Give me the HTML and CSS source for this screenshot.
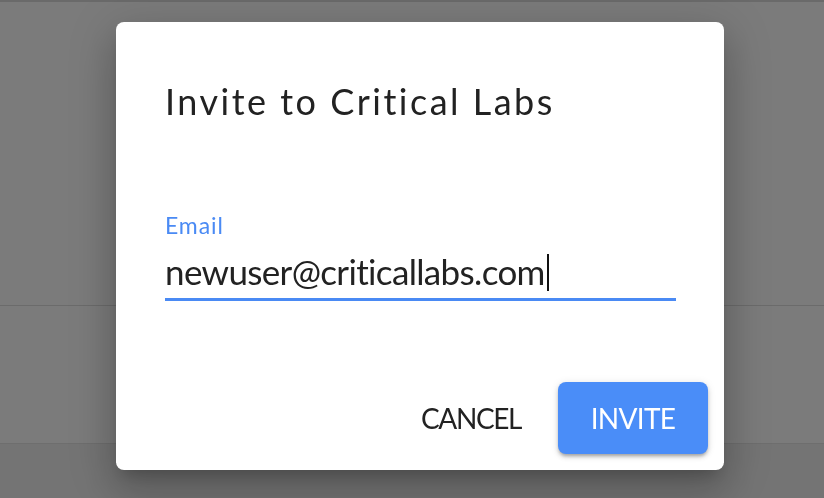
FILE: index.html
```html
<!DOCTYPE html>
<html lang="en">
<head>
<meta charset="utf-8">
<title>Invite to Critical Labs</title>
<link rel="stylesheet" href="styles.css">
</head>
<body>
<div class="app">
  <div class="topstrip"></div>
  <div class="panel"></div>
  <div class="card"></div>
  <div class="below"></div>
</div>
<div class="backdrop">
  <div class="dialog" role="dialog" aria-labelledby="dlg-title">
    <h2 class="title" id="dlg-title">Invite to Critical Labs</h2>
    <div class="field">
      <label class="label" for="email">Email</label>
      <div class="input" id="email"><span class="value">newuser@criticallabs.com</span><span class="caret"></span></div>
    </div>
    <div class="actions">
      <button class="btn btn-text" type="button">CANCEL</button>
      <button class="btn btn-primary" type="button">INVITE</button>
    </div>
  </div>
</div>
</body>
</html>
```
FILE: styles.css
```css
* { box-sizing: border-box; }
html, body { margin: 0; padding: 0; }
body {
  width: 824px;
  height: 498px;
  overflow: hidden;
  background: #7a7a7a;
  font-family: "Lato", "Open Sans", sans-serif;
}
.app {
  display: flex;
  flex-direction: column;
  height: 498px;
}
.topstrip {
  height: 2px;
  background: #6a6a6a;
}
.panel {
  height: 304px;
  border-bottom: 1px solid #6c6c6c;
  background: #7b7b7b;
}
.card {
  height: 138px;
  background: #7b7b7b;
  box-shadow: 0 2px 3px rgba(0,0,0,0.18);
  border-bottom: 1px solid #6e6e6e;
}
.below {
  flex: 1;
  background: #747474;
}
.backdrop {
  position: fixed;
  inset: 0;
  display: flex;
  align-items: flex-start;
  padding: 22px 0 0 116px;
}
.dialog {
  width: 608px;
  height: 448px;
  background: #ffffff;
  border-radius: 8px;
  display: flex;
  flex-direction: column;
  box-shadow: 0 11px 15px -7px rgba(0,0,0,0.2), 0 24px 38px 3px rgba(0,0,0,0.14), 0 9px 46px 8px rgba(0,0,0,0.12);
}
.title {
  margin: 58px 0 0 49px;
  font-size: 36px;
  line-height: 43px;
  font-weight: 400;
  letter-spacing: 2.5px;
  color: #222222;
}
.field {
  margin: 89px 0 0 49px;
  width: 511px;
  display: flex;
  flex-direction: column;
}
.label {
  font-size: 23px;
  line-height: 26px;
  font-weight: 400;
  color: #4a8af4;
  letter-spacing: 0.9px;
}
.input {
  margin-top: 12px;
  height: 51px;
  padding-bottom: 6px;
  border-bottom: 3px solid #4a8af4;
  display: flex;
  align-items: flex-start;
  font-size: 35px;
  line-height: 42px;
  font-weight: 400;
  color: #222222;
}
.value {
  letter-spacing: -0.65px;
}
.caret {
  width: 2px;
  height: 37px;
  margin: 4px 0 0 2px;
  background: #111111;
}
.actions {
  margin-top: auto;
  padding: 0 16px 16px 0;
  display: flex;
  justify-content: flex-end;
  gap: 20px;
}
.btn {
  height: 72px;
  border: 0;
  border-radius: 8px;
  font-family: "Lato", "Open Sans", sans-serif;
  font-size: 28px;
  font-weight: 400;
  cursor: pointer;
  padding: 0;
}
.btn-text {
  width: 134px;
  background: transparent;
  color: #222222;
  letter-spacing: -1.4px;
}
.btn-primary {
  width: 150px;
  background: #4a8df8;
  color: #ffffff;
  letter-spacing: -0.7px;
  box-shadow: 0 3px 3px -1px rgba(0,0,0,0.2), 0 3px 5px rgba(0,0,0,0.14), 0 1px 9px rgba(0,0,0,0.1);
}
```
